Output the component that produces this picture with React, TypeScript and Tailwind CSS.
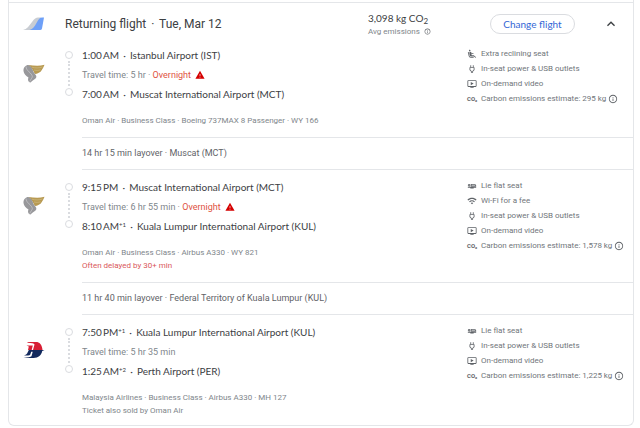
import React from 'react';
import type { IconType } from 'react-icons';
import {
  MdAirlineSeatReclineExtra,
  MdExpandLess,
  MdOutlineAirlineSeatFlat,
  MdOutlineInfo,
  MdOutlineOndemandVideo,
  MdOutlinePower,
  MdWarning,
  MdWifi,
} from 'react-icons/md';

interface Stop {
  time: string;
  meridiem: 'AM' | 'PM';
  dayOffset?: string;
  airport: string;
}

interface Segment {
  airline: 'oman' | 'malaysia';
  departure: Stop;
  arrival: Stop;
  duration: string;
  overnight?: boolean;
  details: string[];
  delay?: string;
  note?: string;
  amenities: { icon: IconType; label: string }[];
  emissions: string;
  layover?: string;
}

const extraRecline = { icon: MdAirlineSeatReclineExtra, label: 'Extra reclining seat' };
const lieFlat = { icon: MdOutlineAirlineSeatFlat, label: 'Lie flat seat' };
const wifi = { icon: MdWifi, label: 'Wi-Fi for a fee' };
const power = { icon: MdOutlinePower, label: 'In-seat power & USB outlets' };
const video = { icon: MdOutlineOndemandVideo, label: 'On-demand video' };

const segments: Segment[] = [
  {
    airline: 'oman',
    departure: { time: '1:00', meridiem: 'AM', airport: 'Istanbul Airport (IST)' },
    arrival: { time: '7:00', meridiem: 'AM', airport: 'Muscat International Airport (MCT)' },
    duration: '5 hr',
    overnight: true,
    details: ['Oman Air', 'Business Class', 'Boeing 737MAX 8 Passenger', 'WY 166'],
    amenities: [extraRecline, power, video],
    emissions: '295 kg',
    layover: '14 hr 15 min layover · Muscat (MCT)',
  },
  {
    airline: 'oman',
    departure: { time: '9:15', meridiem: 'PM', airport: 'Muscat International Airport (MCT)' },
    arrival: { time: '8:10', meridiem: 'AM', dayOffset: '+1', airport: 'Kuala Lumpur International Airport (KUL)' },
    duration: '6 hr 55 min',
    overnight: true,
    details: ['Oman Air', 'Business Class', 'Airbus A330', 'WY 821'],
    delay: 'Often delayed by 30+ min',
    amenities: [lieFlat, wifi, power, video],
    emissions: '1,578 kg',
    layover: '11 hr 40 min layover · Federal Territory of Kuala Lumpur (KUL)',
  },
  {
    airline: 'malaysia',
    departure: { time: '7:50', meridiem: 'PM', dayOffset: '+1', airport: 'Kuala Lumpur International Airport (KUL)' },
    arrival: { time: '1:25', meridiem: 'AM', dayOffset: '+2', airport: 'Perth Airport (PER)' },
    duration: '5 hr 35 min',
    details: ['Malaysia Airlines', 'Business Class', 'Airbus A330', 'MH 127'],
    note: 'Ticket also sold by Oman Air',
    amenities: [lieFlat, power, video],
    emissions: '1,225 kg',
  },
];

const TailLogo: React.FC = () => (
  <svg viewBox="0 0 22 14" className="w-[22px] h-[14px]" aria-hidden="true">
    <path d="M0 13C4 12 6 9 9 5C11.500 1.500 13 0.500 15 0.500H18L10 13Z" fill="#c9cdd3" />
    <path d="M6.500 13C10 12 11.500 9.500 13.500 6C15.500 2 17 0.500 19 0.500H21L19 11.500Q18.700 13 17 13Z" fill="#6ea0f8" />
  </svg>
);

const OmanAirLogo: React.FC = () => (
  <svg viewBox="0 0 22 19" className="w-[22px] h-[19px]" aria-hidden="true">
    <path d="M5.500 1C11 1.600 16 2.200 21.500 0.800C20.500 3.500 19.500 5 18.800 6C17.500 8.500 14.500 9.800 11.800 10C10.500 7 9 4 5.500 1Z" fill="#b89a52" />
    <path d="M9 3.200C12 4.200 16 4.200 19.500 3M11 6C13.500 6.500 15.500 6.500 17.500 5.800" fill="none" stroke="#d9c896" strokeWidth="0.500" />
    <path d="M0.500 7C0.300 3.500 2.500 1 5.500 1C8.500 2.500 9.500 5 10.500 8C12 10.500 14 11.500 13.200 13.500C12.500 15.500 9.500 16 7.500 18.500C5 18 4.600 15.500 5.500 13.500C3 12 0.800 10 0.500 7Z" fill="#98989b" />
    <path d="M3 2.500C3 7 9 9 9.300 12.500C9.300 14 7.500 15.500 6.800 17.500" fill="none" stroke="#d4d4d6" strokeWidth="0.600" />
  </svg>
);

const MalaysiaLogo: React.FC = () => (
  <svg viewBox="0 0 22 18" className="w-[22px] h-[18px]" aria-hidden="true">
    <path d="M4.500 1H13C16.500 1 19 3.500 19.500 9H10L11.500 3.500Q11 2 4.500 1.800Z" fill="#d81f35" />
    <path d="M3.500 4.500H9.800L8.700 9H5L5.800 5.500Z" fill="#d81f35" />
    <path d="M5.800 9H21.500L19.200 10C18.500 14 15.500 17 10.500 17H0.500Q7 16.300 8.500 15.300L9.700 10.800H8.200L7.300 13.500Q6.800 14.500 5 14.500H1Q3.700 13.700 4.100 12.500Z" fill="#12295d" />
  </svg>
);

const Info: React.FC<{ className: string; label: string }> = ({ className, label }) => (
  <button type="button" aria-label={label} className="shrink-0 text-[#5f6368]">
    <MdOutlineInfo className={className} />
  </button>
);

const StopLine: React.FC<{ stop: Stop }> = ({ stop }) => (
  <p className="flex items-center font-['Lato',sans-serif] text-[10px] leading-[19px] text-[#3c4043]">
    <span className="mr-px">{stop.time}</span>
    <span>{stop.meridiem}</span>
    {stop.dayOffset && <span className="self-start text-[6px] leading-[15px]">{stop.dayOffset}</span>}
    <span className="w-[11px] text-center">·</span>
    <span>{stop.airport}</span>
  </p>
);

const Timeline: React.FC = () => (
  <div className="flex flex-col items-center w-2 h-[45px] mt-[5px]" aria-hidden="true">
    <span className="size-2 rounded-full border border-[#dadce0]" />
    <span className="flex-1 my-[2px] border-l-2 border-dotted border-[#dadce0]" />
    <span className="size-2 rounded-full border border-[#dadce0]" />
  </div>
);

const FlightSegment: React.FC<{ segment: Segment }> = ({ segment }) => (
  <section className="flex pt-2 first-of-type:pt-px last-of-type:-mb-[2px]">
    <div className="w-14 shrink-0 pl-[14px] pt-[18px]">
      {segment.airline === 'oman' ? <OmanAirLogo /> : <MalaysiaLogo />}
    </div>
    <div className="shrink-0 w-[17px]">
      <Timeline />
    </div>
    <div className="flex-1 min-w-0">
      <div className="flex pb-[10px]">
        <div className="flex-1 min-w-0">
          <StopLine stop={segment.departure} />
          <p className="flex items-center text-[9px] leading-[20px] text-[#80868b]">
            <span>Travel time: {segment.duration}</span>
            {segment.overnight && (
              <>
                <span className="whitespace-pre"> · </span>
                <span className="text-[#e0533f]">Overnight</span>
                <MdWarning className="ml-1 size-[10px] text-[#d50000]" />
              </>
            )}
          </p>
          <StopLine stop={segment.arrival} />
          <div className="mt-[10px] text-[8px] leading-[13px] text-[#80868b]">
            <p>{segment.details.join(' · ')}</p>
            {segment.delay && <p className="text-[#d9575b]">{segment.delay}</p>}
            {segment.note && <p>{segment.note}</p>}
          </div>
        </div>
        <ul className="w-[166px] shrink-0 text-[8px] leading-[15px] text-[#70757a]">
          {segment.amenities.map(({ icon: Icon, label }) => (
            <li key={label} className="flex items-center">
              <Icon className="size-[10px] mr-1 text-[#5f6368]" />
              {label}
            </li>
          ))}
          <li className="flex items-center">
            <span className="w-[14px] text-[6px] font-bold text-[#5f6368]">CO₂</span>
            <span className="mr-[2px]">Carbon emissions estimate: {segment.emissions}</span>
            <Info className="size-[10px]" label="About this estimate" />
          </li>
        </ul>
      </div>
      {segment.layover && (
        <p className="border-y border-[#e4e6e9] text-[9px] leading-[31px] text-[#5f6368]">{segment.layover}</p>
      )}
    </div>
  </section>
);

const App: React.FC = () => {
  return (
    <main className="bg-white pl-2 pr-[6px] font-['Roboto',sans-serif]">
      <article className="border-x border-b border-[#e4e6e9] rounded-b-md pt-[2px]">
        <header className="flex items-center border-t border-[#e4e6e9] h-[43px]">
          <div className="w-14 shrink-0 pl-[14px]">
            <TailLogo />
          </div>
          <h1 className="flex-1 text-[12px] text-[#3c4043]">
            Returning flight <span className="mx-[2px]">·</span> Tue, Mar 12
          </h1>
          <div className="w-[122px]">
            <p className="font-['Lato',sans-serif] text-[10px] leading-[14px] text-[#3c4043]">
              3,098 kg CO<sub className="text-[8px]">2</sub>
            </p>
            <p className="flex items-center gap-1 text-[8px] leading-[13px] text-[#80868b]">
              Avg emissions <Info className="size-[7px]" label="About average emissions" />
            </p>
          </div>
          <button
            type="button"
            className="w-[85px] h-5 rounded-full border border-[#dadce0] font-['Lato',sans-serif] text-[10px] text-[#3367d6]"
          >
            Change flight
          </button>
          <button type="button" aria-label="Collapse flight details" className="ml-[28px] mr-[14px] text-[#3c4043]">
            <MdExpandLess className="size-4" />
          </button>
        </header>
        {segments.map((segment) => (
          <FlightSegment key={segment.departure.time} segment={segment} />
        ))}
      </article>
    </main>
  );
};

export default App;
